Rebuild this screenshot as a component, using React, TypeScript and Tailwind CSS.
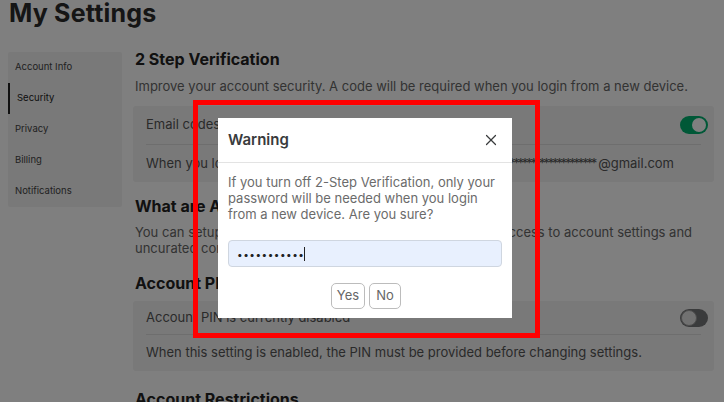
import React from 'react';
import { X } from 'lucide-react';

function Toggle({ on }: { on: boolean }) {
  return on ? (
    <div className="w-[28px] h-[18px] rounded-full bg-[#00b06f] flex items-center justify-end px-[2px]">
      <div className="w-[14px] h-[14px] rounded-full bg-white" />
    </div>
  ) : (
    <div className="w-[28px] h-[18px] rounded-full bg-[#757678] flex items-center justify-start px-[1px]">
      <div className="w-[16px] h-[16px] rounded-full bg-[#e3e3e3] border border-[#9a9a9a]" />
    </div>
  );
}

const navItems = ['Account Info', 'Security', 'Privacy', 'Billing', 'Notifications'];

export default function App() {
  return (
    <div className="relative w-[724px] h-[402px] overflow-hidden bg-white font-['Inter',sans-serif] text-[#393b3d]">
      <h1 className="pl-[9px] text-[25px] font-bold leading-[28px] -mt-[1px] text-[#2a2a2a] tracking-[0.2px]">My Settings</h1>

      <div className="flex">
        <aside className="flex-none ml-[8px] mt-[25px] w-[114px] h-[155px] bg-[#f2f2f2] rounded-[2px]">
          {navItems.map((item) => (
            <div
              key={item}
              className={
                'h-[31px] flex items-center pl-[7px] text-[9.5px] ' +
                (item === 'Security' ? 'border-l-[2px] border-[#222] pl-[5px] text-[#222]' : 'text-[#444]')
              }>
              {item}
            </div>
          ))}
        </aside>

        <main className="ml-[13px] mr-[10px] flex-1 min-w-0 pt-[22px]">
          <h2 className="h-[20px] leading-[20px] text-[16px] font-bold text-[#222]">2 Step Verification</h2>
          <p className="mt-[9px] leading-[16px] text-[13px] text-[#666]">
            Improve your account security. A code will be required when you login from a new device.
          </p>

          <div className="mt-[12px] -ml-[2px] bg-[#f2f2f2] rounded-[3px] px-[13px]">
            <div className="h-[38px] flex items-center justify-between">
              <span className="text-[13px] text-[#555]">Email codes</span>
              <div className="-mr-[7px]">
                <Toggle on />
              </div>
            </div>
            <div className="h-px bg-[#dcdcdc]" />
            <div className="h-[37px] flex items-center text-[13px] text-[#555] whitespace-nowrap pr-[27px]">
              <span className="flex-none">When you log in from a new device, a code is sent to</span>
              <span className="flex-1 min-w-0 overflow-hidden text-right">
                <span className="tracking-[-2.2px]">************************</span>
                <span className="ml-[3px]">@gmail.com</span>
              </span>
            </div>
          </div>

          <h2 className="mt-[14px] h-[20px] leading-[20px] text-[16px] font-bold text-[#222]">What are Account Restrictions?</h2>
          <p className="mt-[8px] leading-[16px] text-[13px] text-[#666]">
            You can setup parental controls to restrict content and limit access to account settings and uncurated content.
          </p>

          <h2 className="mt-[17px] h-[20px] leading-[20px] text-[16px] font-bold text-[#222]">Account PIN</h2>
          <div className="mt-[8px] -ml-[2px] bg-[#f2f2f2] rounded-[3px] px-[13px]">
            <div className="h-[33px] flex items-center justify-between">
              <span className="text-[13px] text-[#555]">Account PIN is currently disabled</span>
              <div className="-mr-[7px]">
                <Toggle on={false} />
              </div>
            </div>
            <div className="h-px bg-[#dcdcdc]" />
            <div className="h-[36px] flex items-center text-[13px] text-[#555]">
              When this setting is enabled, the PIN must be provided before changing settings.
            </div>
          </div>

          <h2 className="mt-[18px] h-[20px] leading-[20px] text-[16px] font-bold text-[#222]">Account Restrictions</h2>
        </main>
      </div>

      {/* dimming overlay */}
      <div className="absolute inset-0 bg-black/50" />

      {/* modal */}
      <div className="absolute left-[218px] top-[118px] w-[294px] h-[200px] bg-white flex flex-col">
        <div className="h-[45px] flex items-center justify-between pl-[10px] pr-[12px] border-b border-[#e3e3e3]">
          <span className="text-[15px] font-semibold text-[#393b3d]">Warning</span>
          <X size={18} strokeWidth={1.6} className="text-[#393b3d]" />
        </div>
        <p className="mt-[11px] px-[10px] text-[13px] leading-[16px] text-[#6b6b6b]">
          If you turn off 2-Step Verification, only your password will be needed when you login from a new device. Are you sure?
        </p>
        <div className="mx-[10px] mt-[18px] h-[27px] rounded-[4px] border border-[#cfd6e0] bg-[#e8f0fe] flex items-center pl-[8px]">
          <span className="text-[10px] tracking-[0.5px] text-[#222] leading-none">•••••••••••</span>
          <span className="w-px h-[14px] bg-[#222]" />
        </div>
        <div className="mt-[16px] flex justify-center gap-[4px] pl-[2px]">
          <button className="w-[34px] h-[26px] rounded-[5px] border border-[#bcbcbc] text-[13px] text-[#666]">Yes</button>
          <button className="w-[32px] h-[26px] rounded-[5px] border border-[#bcbcbc] text-[13px] text-[#666]">No</button>
        </div>
      </div>

      {/* annotation */}
      <div className="absolute left-[193px] top-[100px] w-[347px] h-[238px] border-[5px] border-[#ff0000]" />
    </div>
  );
}
